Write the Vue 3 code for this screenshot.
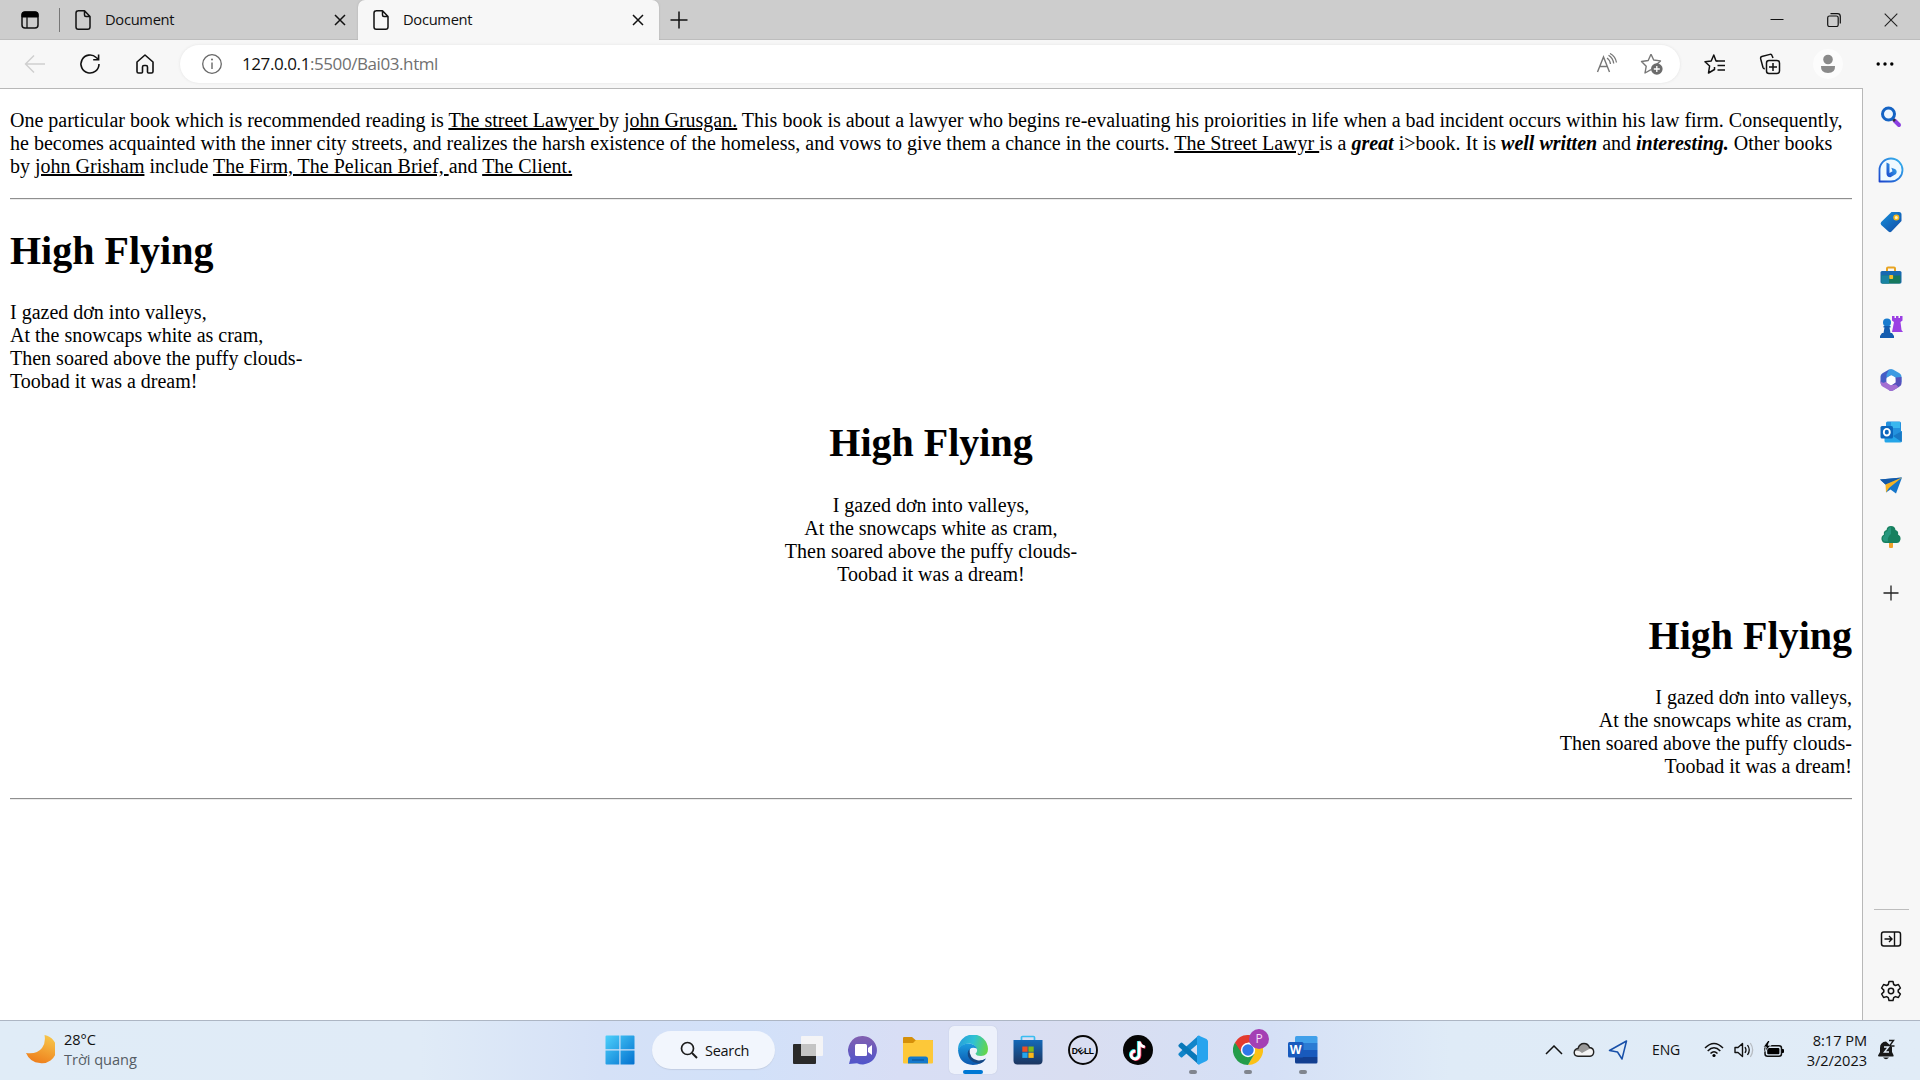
<script setup>
const tabs = [
  { title: 'Document', active: false },
  { title: 'Document', active: true }
]
const poems = ['left', 'center', 'right']
</script>

<template>
  <div class="screen">
    <header class="tabstrip">
      <div class="workspace">
        <svg width="20" height="20" viewBox="0 0 20 20"><rect x="2" y="2" width="16" height="16" rx="3" fill="none" stroke="#111" stroke-width="1.5" /><path d="M2 7V4.500Q2 2 4.500 2H15.500Q18 2 18 4.500V7Z" fill="#000" stroke="#000" /><path d="M7 7V18" stroke="#111" stroke-width="1.300" /></svg>
      </div>
      <div v-for="(tab, i) in tabs" :key="i" class="tab" :class="{ active: tab.active }">
        <svg class="doc" width="18" height="22" viewBox="0 0 18 22"><path d="M4 1.700H10.500L16 7.500V18Q16 20.300 13.700 20.300H4.300Q2 20.300 2 18V4Q2 1.700 4.300 1.700M10.500 1.700V6Q10.500 7.500 12 7.500H16" fill="none" stroke="#111" stroke-width="1.500" stroke-linejoin="round" /></svg>
        <span class="title">{{ tab.title }}</span>
        <svg width="12" height="12" viewBox="0 0 12 12"><path d="M1 1L11 11M11 1L1 11" stroke="#111" stroke-width="1.500" /></svg>
      </div>
      <div class="newtab">
        <svg width="18" height="18" viewBox="0 0 18 18"><path d="M9 0.500V17.500M0.500 9H17.500" stroke="#111" stroke-width="1.500" /></svg>
      </div>
      <div class="window-buttons">
        <svg width="14" height="14" viewBox="0 0 14 14"><path d="M0.500 6.500H13.500" stroke="#111" /></svg>
        <svg width="14" height="14" viewBox="0 0 14 14"><rect x="0.700" y="3" width="10.500" height="10.500" rx="1.800" fill="none" stroke="#111" stroke-width="1.200" /><path d="M3.500 0.700H10.500Q13.300 0.700 13.300 3.500V10.500" fill="none" stroke="#111" stroke-width="1.200" /></svg>
        <svg width="14" height="14" viewBox="0 0 14 14"><path d="M0.700 0.700L13.300 13.300M13.300 0.700L0.700 13.300" stroke="#222" stroke-width="1.100" /></svg>
      </div>
    </header>

    <div class="toolbar">
      <div class="nav">
        <svg width="22" height="22" viewBox="0 0 22 22"><path d="M21 11H2M10 2.500L1.500 11L10 19.500" fill="none" stroke="#cfcfcf" stroke-width="1.400" /></svg>
        <svg width="22" height="22" viewBox="0 0 22 22"><path d="M20 11A9 9 0 1 1 17.200 4.500L19.500 6.500M19.600 1.500V6.700H14.200" fill="none" stroke="#111" stroke-width="1.600" /></svg>
        <svg width="22" height="22" viewBox="0 0 22 22"><path d="M11 2L19 9V18.500Q19 20 17.500 20H14.500Q13.500 20 13.500 19V14Q13.500 12.500 12 12.500H10Q8.500 12.500 8.500 14V19Q8.500 20 7.500 20H4.500Q3 20 3 18.500V9Z" fill="none" stroke="#111" stroke-width="1.600" stroke-linejoin="round" /></svg>
      </div>
      <div class="address">
        <svg width="22" height="22" viewBox="0 0 22 22"><circle cx="11" cy="11" r="9.300" fill="none" stroke="#686868" stroke-width="1.300" /><path d="M11 9.500V16" stroke="#686868" stroke-width="1.400" /><circle cx="11" cy="6.600" r="1" fill="#686868" /></svg>
        <span class="url"><b>127.0.0.1</b>:5500/Bai03.html</span>
        <svg class="read" width="22" height="22" viewBox="0 0 22 22"><path d="M1.500 19L7.500 4L13.500 19M3.800 13.500H11.200" fill="none" stroke="#777" stroke-width="1.400" /><path d="M11 5Q14 7 14.500 11M12.500 2.300Q17 5 17.700 10.500M14 0.500Q19.500 3.500 20.500 9.500" fill="none" stroke="#777" stroke-width="1.300" /></svg>
        <svg class="addfav" width="24" height="24" viewBox="0 0 24 24"><path d="M11 2.300L13.700 8L20.500 8.900L15.700 13.300M11 17.600L5 21L6.200 14.300L1.500 9.500L8.200 8.500L11 2.300" fill="none" stroke="#777" stroke-width="1.400" stroke-linejoin="round" /><circle cx="16.800" cy="17" r="5.800" fill="#6c6c6c" /><path d="M16.800 14V20M13.800 17H19.800" stroke="#fff" stroke-width="1.300" /></svg>
      </div>
      <div class="actions">
        <svg width="22" height="22" viewBox="0 0 22 22"><path d="M13.500 8H12L9.800 2L7.200 8L1 8.800L5.600 13L4.500 20L10.500 16.500L10.500 14" fill="none" stroke="#111" stroke-width="1.500" stroke-linejoin="round" /><path d="M12.500 8H21M13.500 12.500H21M13.500 17H21" stroke="#111" stroke-width="1.500" /></svg>
        <svg width="22" height="22" viewBox="0 0 22 22"><path d="M14 5L13 2.500Q12.500 1 11 1.400L2.800 3.500Q1.200 4 1.600 5.600L4 14.500Q4.500 15.800 5.800 15.600" fill="none" stroke="#111" stroke-width="1.500" /><rect x="7.500" y="7.500" width="13" height="13" rx="2.500" fill="none" stroke="#111" stroke-width="1.500" /><path d="M14 10V18M10 14H18" stroke="#111" stroke-width="1.500" /></svg>
        <svg width="30" height="30" viewBox="0 0 30 30"><circle cx="15" cy="15" r="15" fill="#fcfcfc" /><circle cx="15" cy="10.500" r="4.800" fill="#8a8a8a" /><path d="M8 17H22Q22.500 24 15 24Q7.500 24 8 17Z" fill="#8a8a8a" /></svg>
        <svg width="18" height="6" viewBox="0 0 18 6"><circle cx="2.200" cy="3" r="1.700" /><circle cx="9" cy="3" r="1.700" /><circle cx="15.800" cy="3" r="1.700" /></svg>
      </div>
    </div>

    <div class="middle">
      <main class="page">
        <p class="intro">One particular book which is recommended reading is <u>The street Lawyer </u>by <u>john Grusgan.</u> This book is about a lawyer who begins re-evaluating his proiorities in life when a bad incident occurs within his law firm. Consequently,<br>he becomes acquainted with the inner city streets, and realizes the harsh existence of the homeless, and vows to give them a chance in the courts. <u>The Street Lawyr </u>is a <b><i>great</i></b> i&gt;book. It is <b><i>well written</i></b> and <b><i>interesting.</i></b> Other books<br>by <u>john Grisham</u> include <u>The Firm, The Pelican Brief, </u>and <u>The Client.</u></p>
        <hr>
        <div class="poems">
          <section v-for="side in poems" :key="side" :class="side">
            <h1>High Flying</h1>
            <p>I gazed dơn into valleys,<br>At the snowcaps white as cram,<br>Then soared above the puffy clouds-<br>Toobad it was a dream!</p>
          </section>
        </div>
        <hr>
      </main>
      <aside class="sidebar">
        <div class="slot"><svg width="24" height="24" viewBox="0 0 24 24"><path d="M15.500 15.500L20 20" stroke="#8b3fe0" stroke-width="4" stroke-linecap="round" /><path d="M14 14L16 16" stroke="#333" stroke-width="2.500" /><circle cx="9.500" cy="9" r="6" fill="#eef7ff" stroke="#1463c4" stroke-width="3" /></svg></div>
        <div class="slot"><svg width="28" height="28" viewBox="0 0 28 28"><defs><linearGradient id="bing" x1="0" y1="1" x2="1" y2="0"><stop offset="0" stop-color="#1b45cc" /><stop offset="1" stop-color="#38b8ee" /></linearGradient></defs><path d="M2.500 25.500V14A11.500 11.500 0 1 1 14 25.500Z" fill="#effaff" stroke="url(#bing)" stroke-width="1.800" stroke-linejoin="round" /><path d="M9.500 6.500L12.500 8V17L15.500 15.200L14.300 11.800L18 13Q20.800 15 19 18L13.500 21.300Q9.500 21 9.500 17.500Z" fill="url(#bing)" /></svg></div>
        <div class="slot"><svg width="24" height="24" viewBox="0 0 24 24"><defs><linearGradient id="tag" x1="0" y1="0" x2="1" y2="1"><stop offset="0" stop-color="#1692dc" /><stop offset="1" stop-color="#1249a4" /></linearGradient></defs><path d="M12.500 2H20Q22.500 2 22.500 4.500V11L12.500 21.500Q11 23 9.500 21.500L2.200 15Q1 13.500 2.200 12Z" fill="url(#tag)" /><circle cx="17.300" cy="7.500" r="2.300" fill="#fff2bd" stroke="#f5b719" stroke-width="1.500" /></svg></div>
        <div class="slot"><svg width="24" height="24" viewBox="0 0 24 24"><path d="M8 8V5.500Q8 4.500 9 4.500H15Q16 4.500 16 5.500V8" fill="none" stroke="#e8a422" stroke-width="2" /><rect x="1.500" y="8" width="21" height="12.500" rx="1.500" fill="#1768b0" /><path d="M2.500 12.500H21.500V19Q21.500 20.500 20 20.500H4Q2.500 20.500 2.500 19Z" fill="#16795e" /><path d="M2.500 12.500H10V20.500H4Q2.500 20.500 2.500 19Z" fill="#1883a2" /><rect x="10.300" y="12" width="3.800" height="4" rx=".8" fill="#f8bd28" /></svg></div>
        <div class="slot"><svg width="24" height="24" viewBox="0 0 24 24"><path d="M13 1H15.500V3H17V1H19.500V3H21V1H23.500V5.500L21.500 7L22.500 15L24 17H13L15 7L13 5.500Z" fill="#9b3fe3" /><circle cx="8" cy="7.500" r="4" fill="#187bcf" /><path d="M4.500 11H11.500V12.500H10.500L11.500 18H4.500L5.500 12.500H4.500ZM3 18H13L15 21V23H1V21Z" fill="#135caf" /></svg></div>
        <div class="slot"><svg width="24" height="24" viewBox="0 0 24 24"><path d="M10 1.500L14.500 4L12.500 7.500L7.500 10.500V17L4.500 18.500Q1.500 17 1.500 14V8.500Q1.500 6.500 3.500 5.300Z" fill="#465dc6" /><path d="M10 1.500Q12 .5 14 1.500L20.500 5.300Q22.500 6.500 22.500 8.500V14.500L16.500 11L16.500 9.500L12 7L7.500 10V6.500Z" fill="#3f9be2" /><path d="M22.500 9V15.500Q22.500 17.300 20.500 18.500L14 22.500Q12 23.500 10 22.300L9 17L12 17.500L16.500 14.500V9.500Z" fill="#5751bd" /><path d="M1.500 12Q2 15.500 5.500 14.500L7.500 13.500V14.500L12 17.300L17 16.500L19.500 19.200L14 22.500Q12 23.500 10 22.300L3.500 18.600Q1.500 17 1.500 14Z" fill="#a46fd2" /><path d="M12 7.200L16.300 9.700V14.500L12 17.200L7.700 14.500V9.700Z" fill="#fff" /></svg></div>
        <div class="slot"><svg width="24" height="24" viewBox="0 0 24 24"><rect x="7" y="1.500" width="15" height="15" rx="1.500" fill="#2492de" /><path d="M12 2H21V8H12Z" fill="#39b7ef" /><path d="M5.500 11L14 16L22.800 11V21Q22.800 22.500 21 22.500H7Q5.500 22.500 5.500 21Z" fill="#24a5e8" /><path d="M14 16L22.800 22V11Z" fill="#1878c5" /><rect x="1.500" y="6" width="12.500" height="12.500" rx="1.500" fill="#0c67bd" /><ellipse cx="7.800" cy="12.200" rx="3" ry="3.300" fill="none" stroke="#fff" stroke-width="1.900" /></svg></div>
        <div class="slot"><svg width="24" height="24" viewBox="0 0 24 24"><path d="M1 6.500L23 4.500L17 20.500L11.500 16.500L7 19.500V12Z" fill="#1676ca" /><path d="M1 6.500L23 4.500L6.500 11.500Z" fill="#1459a8" /><path d="M23 4.500L6.500 11.500L7 19.500L10 15Z" fill="#f6b323" /></svg></div>
        <div class="slot"><svg width="24" height="24" viewBox="0 0 24 24"><rect x="10" y="15" width="4" height="8" rx="1" fill="#f0a22a" /><path d="M12 1Q16 1 16.500 5Q20 6 19 9.500Q22 11 21.500 14.500Q20.500 18.500 17 18H7Q3.500 18.500 2.500 14.500Q2 11 5 9.500Q4 6 7.500 5Q8 1 12 1Z" fill="#17805f" /><path d="M12 2Q8.500 3 8.500 6Q5 7 6 10Q3 12 4 15Q5 17 9 16.500Q8 12 12 9Z" fill="#27977d" /></svg></div>
        <div class="slot add"><svg width="16" height="16" viewBox="0 0 16 16"><path d="M8 .5V15.500M.5 8H15.500" stroke="#222" stroke-width="1.300" /></svg></div>
        <div class="side-bottom">
          <svg width="22" height="18" viewBox="0 0 22 18"><rect x="1.500" y="2" width="19" height="14" rx="2.200" fill="none" stroke="#111" stroke-width="1.500" /><path d="M14.500 2V16M4.500 9H11.500M9 6L12 9L9 12" fill="none" stroke="#111" stroke-width="1.400" /></svg>
          <svg width="22" height="22" viewBox="0 0 22 22"><path d="M9 1.500H13L13.700 4.500L15.400 5.500L18.400 4.500L20.400 8L18.200 10.100V11.900L20.400 14L18.400 17.500L15.400 16.600L13.700 17.600L13 20.500H9L8.300 17.600L6.600 16.600L3.600 17.500L1.600 14L3.800 11.900V10.100L1.600 8L3.600 4.500L6.600 5.500L8.300 4.500Z" fill="none" stroke="#111" stroke-width="1.500" stroke-linejoin="round" /><circle cx="11" cy="11" r="2.700" fill="none" stroke="#111" stroke-width="1.500" /></svg>
        </div>
      </aside>
    </div>

    <footer class="taskbar">
      <div class="weather">
        <svg width="30" height="30" viewBox="0 0 30 30"><defs><linearGradient id="moon" x1="0.700" y1="0" x2="0.300" y2="1"><stop offset="0" stop-color="#f7c64a" /><stop offset="1" stop-color="#ee7d1b" /></linearGradient></defs><path d="M19.500 1A14 14 0 0 1 15 29Q5 28.500 1 19Q12 20.500 17 14Q21 8.500 19.500 1Z" fill="url(#moon)" /></svg>
        <div class="lines"><span>28°C</span><span class="muted">Trời quang</span></div>
      </div>
      <div class="apps">
        <div class="app"><svg width="30" height="30" viewBox="0 0 30 30"><defs><linearGradient id="win" x1="0" y1="0" x2="1" y2="1"><stop offset="0" stop-color="#4dd0fb" /><stop offset="1" stop-color="#0371cf" /></linearGradient></defs><path d="M.5 1.500Q.5 .5 1.500 .5H14.300V14.300H.5ZM15.500 .5H28.500Q29.500 .5 29.500 1.500V14.300H15.500ZM.5 15.500H14.300V29.500H1.500Q.5 29.500 .5 28.500ZM15.500 15.500H29.500V28.500Q29.500 29.500 28.500 29.500H15.500Z" fill="url(#win)" /></svg></div>
        <div class="search">
          <svg width="18" height="18" viewBox="0 0 18 18"><circle cx="7.500" cy="7.500" r="6" fill="none" stroke="#1c1c1c" stroke-width="1.700" /><path d="M12 12L17 17" stroke="#1c1c1c" stroke-width="1.900" /></svg>
          <span>Search</span>
        </div>
        <div class="app"><svg width="30" height="30" viewBox="0 0 30 30"><rect x="0" y="9" width="23" height="20" rx="1" fill="#2a2a2a" /><rect x="8" y="1" width="22" height="20" rx="1" fill="#f4f4f6" /><path d="M8 9H23V21H8Z" fill="#c4c4c4" /></svg></div>
        <div class="app"><svg width="30" height="30" viewBox="0 0 30 30"><defs><linearGradient id="chat" x1="0.500" y1="0" x2="0.500" y2="1"><stop offset="0" stop-color="#8260b0" /><stop offset="1" stop-color="#4f55cb" /></linearGradient></defs><path d="M15 1A14.200 14.200 0 1 1 9 28.200L1 29L2.500 23A14.200 14.200 0 0 1 15 1Z" fill="url(#chat)" /><rect x="7" y="9" width="12" height="12" rx="1.500" fill="#fff" /><path d="M20 13L24 10V20L20 17Z" fill="#fff" /></svg></div>
        <div class="app"><svg width="30" height="30" viewBox="0 0 30 30"><path d="M0 3Q0 2 1 2H9L12.500 5H29Q30 5 30 6V12H0Z" fill="#d5900a" /><path d="M0 8H10L13 5H29Q30 5 30 6V27.500Q30 28.500 29 28.500H1Q0 28.500 0 27.500Z" fill="#fdc839" /><path d="M5 28.500V24Q5 21.500 7.500 21.500H22.500Q25 21.500 25 24V28.500Z" fill="#1479cc" /><path d="M9 25H21" stroke="#0a4f8d" /></svg></div>
        <div class="app active"><svg width="30" height="30" viewBox="0 0 30 30"><defs><linearGradient id="edgeTop" x1="0" y1="0.300" x2="1" y2="0.500"><stop offset="0" stop-color="#279edc" /><stop offset=".5" stop-color="#2fc2d4" /><stop offset="1" stop-color="#64d64b" /></linearGradient><linearGradient id="edgeLow" x1="0" y1="0" x2="0" y2="1"><stop offset="0" stop-color="#1c9de0" /><stop offset="1" stop-color="#0b56ae" /></linearGradient></defs><path d="M0 15A15 15 0 0 1 30 14Q30 21 23 21Q18 21 17.500 18.500Q19.500 17 19 14.500Q17 9 11 8.500Q4 8.500 0 15Z" fill="url(#edgeTop)" /><path d="M0 15Q3 8.500 10.500 8.500Q17 9 19 13.500Q11 11 11 18Q12 26 21 26Q25 26 28 23.500Q24 30 15 30Q1 29 0 15Z" fill="url(#edgeLow)" /><path d="M11.500 14Q8 18 11 23Q14 28 22 28.500Q26 27 28 23.500Q24 26 20 25.500Q11 24 11.500 14Z" fill="#164783" /></svg><i class="mark wide"></i></div>
        <div class="app"><svg width="30" height="30" viewBox="0 0 30 30"><defs><linearGradient id="store" x1="0" y1="0" x2="0" y2="1"><stop offset="0" stop-color="#1569b8" /><stop offset="1" stop-color="#1c355f" /></linearGradient></defs><path d="M8.500 6V2.500Q8.500 1.500 9.500 1.500H20.500Q21.500 1.500 21.500 2.500V6" fill="none" stroke="#39bdf1" stroke-width="1.700" /><path d="M.5 5H29.500V25.500Q29.500 29.500 25.500 29.500H4.500Q.5 29.500 .5 25.500Z" fill="url(#store)" /><path d="M9.300 11.500H14.600V16.800H9.300Z" fill="#f05123" /><path d="M15.400 11.500H20.700V16.800H15.400Z" fill="#7eb91c" /><path d="M9.300 17.600H14.600V22.900H9.300Z" fill="#25a6ec" /><path d="M15.400 17.600H20.700V22.900H15.400Z" fill="#fcb817" /></svg></div>
        <div class="app"><svg width="30" height="30" viewBox="0 0 30 30"><circle cx="15" cy="15" r="14" fill="none" stroke="#080808" stroke-width="1.900" /><text x="3.700" y="18.700" class="dell">D</text><text x="9.800" y="18.700" class="dell" transform="rotate(-38 13 15.500)">E</text><text x="16" y="18.700" class="dell">L</text><text x="20.800" y="18.700" class="dell">L</text></svg></div>
        <div class="app"><svg width="30" height="30" viewBox="0 0 30 30"><circle cx="15" cy="15" r="15" fill="#050505" /><g fill="none" stroke-width="2.800"><path d="M15.300 6V19.500A4 4 0 1 1 11.500 15.500M15.300 6Q16 10.500 21 11.500" stroke="#27e5e2" /><path d="M17 7V20.500A4 4 0 1 1 13 16.500M17 7Q17.500 11.500 22.500 12.500" stroke="#f22b56" /><path d="M16.200 6.500V20A4 4 0 1 1 12.300 16M16.200 6.500Q17 11 21.800 12" stroke="#fff" /></g></svg></div>
        <div class="app"><svg width="30" height="30" viewBox="0 0 30 30"><path d="M22 7L4.500 22Q3.500 23 2.500 22L.5 20Q0 19 1 18L20 1Z" fill="#1185ca" /><path d="M22 23L4.500 8Q3.500 7 2.500 8L.5 10Q0 11 1 12L20 29Z" fill="#0878b9" /><path d="M20.500 .5L28.500 4Q30 5 30 6.500V24Q30 25 28.500 26L20.500 29.700Q22 29 22 27V3.500Q22 1 20.500 .5Z" fill="#27a4ee" /><path d="M20.500 .5L22 1V29L20.500 29.700L19 28V1.500Z" fill="#27a4ee" /></svg><i class="mark"></i></div>
        <div class="app"><svg width="30" height="30" viewBox="0 0 30 30"><path d="M28 7.500A15 15 0 0 1 15 30L21.500 18.500L15 8Z" fill="#fbc116" /><path d="M2 7.500A15 15 0 0 0 15 30L21.500 18.800L15 21Z" fill="#249c4a" /><path d="M2 7.500A15 15 0 0 1 28 7.500H15L9 18.500Z" fill="#e33b2e" /><circle cx="15" cy="15" r="7.200" fill="#fff" /><circle cx="15" cy="15" r="5.700" fill="#3078e8" /></svg><span class="badge">P</span><i class="mark"></i></div>
        <div class="app"><svg width="30" height="30" viewBox="0 0 30 30"><path d="M7 2.500Q7 1 8.500 1H28Q29.500 1 29.500 2.500V8H7Z" fill="#41a0ea" /><path d="M7 8H29.500V15H7Z" fill="#2b7bd3" /><path d="M7 15H29.500V22H7Z" fill="#185abd" /><path d="M7 22H29.500V27Q29.500 28.500 28 28.500H8.500Q7 28.500 7 27Z" fill="#123f91" /><rect x="0" y="7" width="15.500" height="15.500" rx="1.500" fill="#185abd" /><text x="1.800" y="18.700" class="word">W</text></svg><i class="mark"></i></div>
      </div>
      <div class="tray">
        <svg class="chev" width="18" height="10" viewBox="0 0 18 10"><path d="M1 9L9 1L17 9" fill="none" stroke="#111" stroke-width="1.500" /></svg>
        <svg class="cloud" width="22" height="16" viewBox="0 0 22 16"><path d="M5 14.300Q1.200 14 1.200 10.500Q1.500 7 5 6.500Q6.500 1.500 11 1.500Q15 1.500 16.500 5.500Q20.700 6 20.700 10Q20.500 14 17 14.300Z" fill="#f4f4f4" /><path d="M2 9Q3 6.500 5 6.500Q6.500 1.500 11 1.500Q15 1.500 16.500 5.500L18 6L9 11Q6 8 2 9Z" fill="#999" /><path d="M5 14.300Q1.200 14 1.200 10.500Q1.500 7 5 6.500Q6.500 1.500 11 1.500Q15 1.500 16.500 5.500Q20.700 6 20.700 10Q20.500 14 17 14.300Z" fill="none" stroke="#222" stroke-width="1.400" /></svg>
        <svg class="loc" width="20" height="20" viewBox="0 0 20 20"><path d="M18.500 1L1.500 10.500L9.500 12L14 19Z" fill="none" stroke="#174fa8" stroke-width="1.500" stroke-linejoin="round" /></svg>
        <span class="lang">ENG</span>
        <svg class="wifi" width="20" height="16" viewBox="0 0 20 16"><path d="M1 6Q10 -3 19 6M3.700 9Q10 2.500 16.300 9M6.500 11.500Q10 8 13.500 11.500" fill="none" stroke="#111" stroke-width="1.500" /><circle cx="10" cy="13.500" r="1.600" /></svg>
        <svg class="sound" width="20" height="16" viewBox="0 0 20 16"><path d="M1 5.500H4L8.500 1.500V14.500L4 10.500H1Z" fill="none" stroke="#111" stroke-width="1.400" stroke-linejoin="round" /><path d="M11 5Q13 8 11 11M13.500 3Q17 8 13.500 13" fill="none" stroke="#111" stroke-width="1.300" /><path d="M16.300 1Q21 8 16.300 15" fill="none" stroke="#b7bcc2" stroke-width="1.300" /></svg>
        <svg class="battery" width="22" height="18" viewBox="0 0 22 18"><rect x="2" y="4.800" width="16.500" height="10.500" rx="2.500" fill="none" stroke="#111" stroke-width="1.500" /><rect x="4.200" y="7" width="12.200" height="6.200" rx="1" /><path d="M19 8H20Q21 8 21 9V11Q21 12 20 12H19Z" /><path d="M5 -.5L.3 6H3.300L2 10.500L8 4.300H5L7 -.5Z" stroke="#e1ecf7" stroke-width=".8" /></svg>
        <div class="lines clock"><span>8:17 PM</span><span>3/2/2023</span></div>
        <svg class="bell" width="20" height="22" viewBox="0 0 20 22"><path d="M9 2.500Q3 3 3 9V13L1 16.500Q1 17.500 2 17.500H16Q17 17.500 16.500 16L15 13V8Z" fill="#181818" /><path d="M6 18.500H12Q9 22 6 18.500Z" fill="#181818" /><path d="M12 1.500H16.500L12.500 7H17.500" fill="none" stroke="#181818" stroke-width="1.400" /><path d="M7 8H11.500L7.500 13H12" fill="none" stroke="#e1ecf7" stroke-width="1.400" /></svg>
      </div>
    </footer>
  </div>
</template>

<style>
body { margin: 0; overflow: hidden; }
</style>

<style scoped>
* { box-sizing: border-box; }
svg { display: block; flex: none; }
.screen { width: 1920px; height: 1080px; display: flex; flex-direction: column; background: #fff; font-family: "Open Sans", "Noto Sans", sans-serif; color: #111; }

.tabstrip { height: 40px; flex: none; display: flex; background: #cdcdcd; box-shadow: inset 0 -1px #bdbdbd; }
.workspace { width: 60px; padding: 10px 0 0 20px; position: relative; }
.workspace::after { content: ""; position: absolute; right: 0; top: 8px; width: 1px; height: 24px; background: #777; }
.tab { width: 298px; height: 40px; padding: 0 12px 0 14px; display: flex; align-items: center; }
.tab.active { width: 301px; padding: 0 15px 0 14px; background: #f7f7f7; border-radius: 7px 7px 0 0; box-shadow: 0 0 2px #aaa; clip-path: inset(0 -3px 0 -3px); }
.title { flex: 1; margin-left: 13px; padding-bottom: 2px; font-size: 14.700px; letter-spacing: -.3px; }
.newtab { padding: 11px 0 0 11px; }
.window-buttons { margin-left: auto; display: flex; gap: 43px; padding: 13px 22px 0 0; }

.toolbar { height: 48px; flex: none; display: flex; align-items: center; background: #f7f7f7; }
.nav { width: 180px; display: flex; gap: 33px; padding-left: 24px; }
.address { width: 1500px; height: 38px; display: flex; align-items: center; padding: 0 16px 0 21px; background: #fff; border-radius: 19px; box-shadow: 0 0 3px #e2e2e2; }
.url { flex: 1; margin-left: 19px; padding-bottom: 2px; font-size: 17px; letter-spacing: -.42px; color: #707070; }
.url b { font-weight: 400; color: #111; }
.addfav { margin-left: 22px; }
.actions { display: flex; align-items: center; padding-left: 24px; }
.actions svg:nth-child(2) { margin-left: 33px; }
.actions svg:nth-child(3) { margin-left: 32px; }
.actions svg:nth-child(4) { margin-left: 33px; }

.middle { height: 932px; flex: none; display: flex; background: #f7f7f7; }
.page { width: 1863px; border-top: 1px solid #b8b8b8; border-right: 1px solid #b8b8b8; padding: 20px 10px 0; background: #fff; font-family: "Liberation Serif", "Times New Roman", serif; font-size: 20px; line-height: 23px; color: #000; }
.page p { margin: 0; }
.intro { white-space: nowrap; }
.page u { text-decoration-thickness: 2px; }
.page hr { margin: 20px 0 0; height: 2px; border: 0; border-top: 1px solid #8f8f8f; border-bottom: 1px solid #ececec; }
.poems { padding-top: 1px; }
.page h1 { margin: 0 0 27px; padding-top: 27px; font-size: 40px; line-height: 46.400px; }
.left { text-align: left; }
.center { text-align: center; }
.right { text-align: right; }

.sidebar { flex: 1; display: flex; flex-direction: column; align-items: center; padding: 3px 1px 0 0; }
.slot { height: 52.500px; display: flex; align-items: center; justify-content: center; }
.add { margin-top: 3px; }
.side-bottom { margin-top: auto; height: 111px; width: 35px; border-top: 1px solid #bdbdbd; display: flex; flex-direction: column; align-items: center; padding-top: 20px; gap: 32px; }

.taskbar { height: 60px; flex: none; display: flex; border-top: 1px solid #adb6c4; background: linear-gradient(90deg, #e0ecf7 0, #e0ebf7 420px, #d5e1f7 600px, #d2e1f9 750px, #d8def5 900px, #d9def1 1080px, #d5e0f6 1270px, #dfebf7 1450px, #e1ecf7 100%); }
.weather { width: 592px; display: flex; padding: 13px 0 0 25px; }
.lines { display: flex; flex-direction: column; font-size: 14.600px; line-height: 20px; letter-spacing: -.05px; }
.weather .lines { margin: -5px 0 0 9px; }
.muted { color: #555c64; }
.apps { display: flex; height: 58px; align-items: center; }
.app { width: 55px; height: 48px; position: relative; display: flex; align-items: center; justify-content: center; }
.app.active::before { content: ""; position: absolute; inset: 0 3px 0 4px; background: #edf1fb; border-radius: 5px; box-shadow: 0 0 1px #aeb8ce; }
.app svg { position: relative; }
.mark { position: absolute; left: 24px; bottom: 0; width: 8px; height: 4px; border-radius: 2px; background: #80858e; }
.mark.wide { left: 18px; width: 20px; background: #0078d4; }
.badge { position: absolute; left: 29px; top: 3px; width: 20px; height: 20px; border-radius: 50%; background: #a43fb4; color: #f5dcf7; font-size: 12px; line-height: 20px; text-align: center; }
.search { width: 123px; height: 38px; margin: 0 5px; display: flex; align-items: center; gap: 7px; padding-left: 28px; border-radius: 19px; background: #f2f6fd; box-shadow: 0 1px 1px #c3cee3; font-size: 14.500px; letter-spacing: -.3px; }
.dell { font: 700 8.500px "Liberation Sans", sans-serif; }
.word { font: 700 12.500px "Liberation Sans", sans-serif; fill: #fff; }
.tray { margin-left: auto; height: 57px; display: flex; align-items: center; padding-right: 23px; }
.cloud { margin-left: 10px; }
.loc { margin-left: 13px; }
.lang { margin-left: 24px; width: 30px; font-size: 14px; letter-spacing: -.1px; }
.wifi { margin-left: 22px; }
.sound { margin-left: 10px; }
.battery { margin-left: 9px; }
.clock { width: 72px; margin-left: 10px; text-align: right; }
.bell { margin-left: 10px; }
</style>
